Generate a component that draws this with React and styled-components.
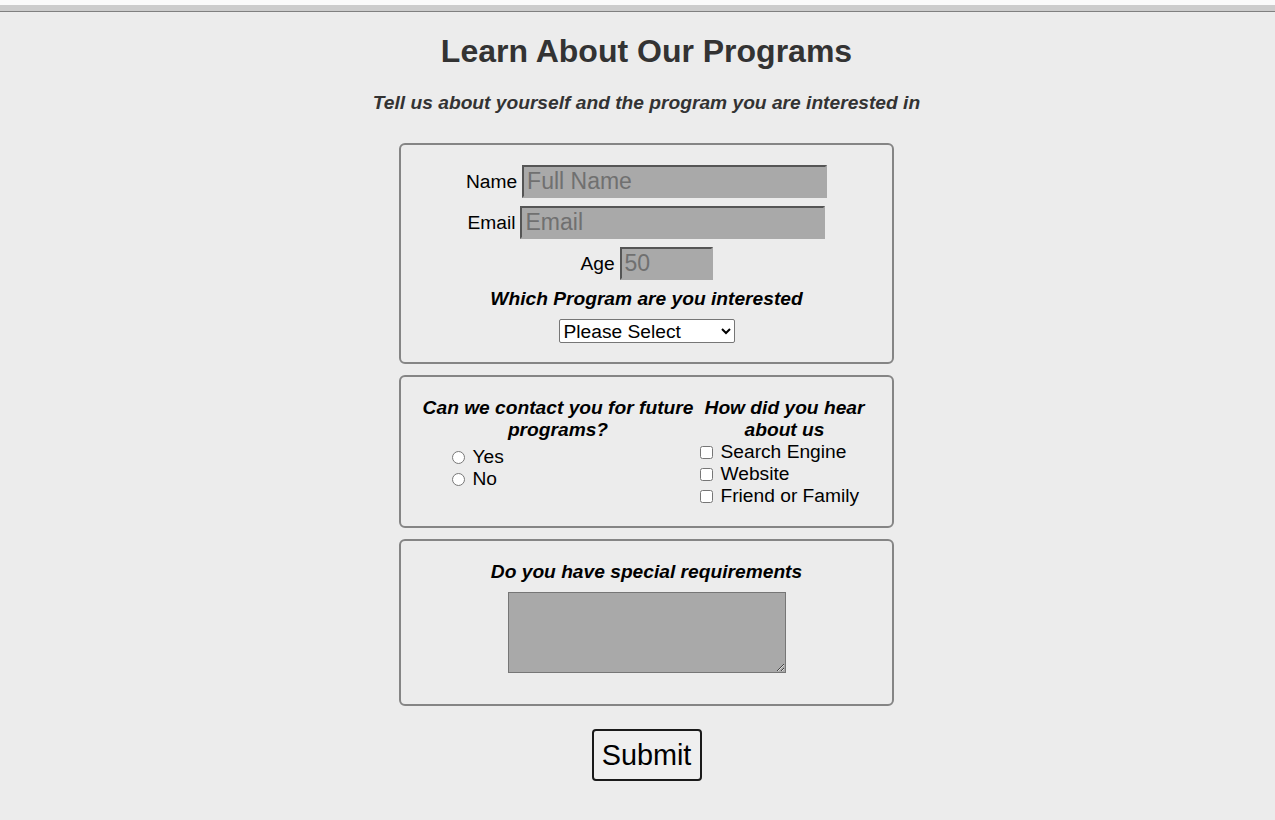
import React from 'react'
import styled, { createGlobalStyle } from 'styled-components'

const GlobalStyle = createGlobalStyle`
  body {
    margin: 0;
    background: #ececec;
    font-family: "Liberation Sans", Arial, sans-serif;
    color: #000;
  }
`

const TopStrip = styled.div`
  height: 6px;
  background: #cccccc;
  border-top: 5px solid #fafafa;
  border-bottom: 1px solid #808080;
`

const Page = styled.main`
  display: flex;
  flex-direction: column;
  align-items: center;
  padding: 21px 0 40px 18px;
`

const Title = styled.h1`
  margin: 0;
  font-size: 32px;
  line-height: 37px;
  font-weight: bold;
  color: #333;
`

const Subtitle = styled.p`
  margin: 22px 0 29px;
  font-size: 19.2px;
  line-height: 22px;
  font-weight: bold;
  font-style: italic;
  color: #333;
`

const Form = styled.form`
  display: flex;
  flex-direction: column;
  align-items: center;
`

const Fieldset = styled.fieldset`
  box-sizing: border-box;
  width: 495px;
  margin: 0 0 11px;
  padding: ${p => p.$pad || '20px 10px 19px'};
  border: 2px solid #858585;
  border-radius: 6px;
  display: flex;
  flex-direction: column;
  align-items: center;
  gap: ${p => p.$gap || '0'};
`

const Row = styled.div`
  display: flex;
  align-items: center;
  gap: 5px;
  font-size: 19.2px;
`

const TextInput = styled.input`
  box-sizing: border-box;
  width: ${p => p.$width}px;
  height: 33px;
  padding: 1px 3px;
  font-family: inherit;
  font-size: 23px;
  background: #a9a9a9;
  border: 2px solid;
  border-color: #555 #a9a9a9 #a9a9a9 #555;
  outline: none;

  &::placeholder {
    color: #707070;
  }
`

const Question = styled.div`
  font-size: 19.2px;
  line-height: 22px;
  font-weight: bold;
  font-style: italic;
  text-align: center;
`

const Select = styled.select`
  box-sizing: border-box;
  width: 176px;
  height: 24px;
  margin-top: 1px;
  font-family: inherit;
  font-size: 19.2px;
  background: #fff;
  border: 1px solid #767676;
  border-radius: 2px;
`

const Columns = styled.div`
  display: flex;
  gap: 4px;
  padding-right: 3px;
`

const Column = styled.div`
  width: ${p => p.$width}px;
  display: flex;
  flex-direction: column;
`

const OptionList = styled.div`
  display: flex;
  flex-direction: column;
  margin-top: ${p => p.$top || '0'};
  padding-left: ${p => p.$indent || '0'};
`

const Option = styled.label`
  display: flex;
  align-items: center;
  height: 22px;
  font-size: 19.2px;

  input {
    margin: 0 8px 0 0;
    width: 13px;
    height: 13px;
  }
`

const TextArea = styled.textarea`
  box-sizing: border-box;
  width: 278px;
  height: 81px;
  margin-top: 9px;
  background: #a9a9a9;
  border: 1px solid #767676;
  font-family: inherit;
`

const SubmitButton = styled.button`
  box-sizing: border-box;
  width: 110px;
  height: 52px;
  margin-top: 12px;
  padding: 0;
  font-family: inherit;
  font-size: 28.8px;
  color: #000;
  background: #efefef;
  border: 2px solid #1a1a1a;
  border-radius: 4px;
`

export default function App() {
  return (
    <>
      <GlobalStyle />
      <TopStrip />
      <Page>
        <Title>Learn About Our Programs</Title>
        <Subtitle>Tell us about yourself and the program you are interested in</Subtitle>
        <Form onSubmit={e => e.preventDefault()}>
          <Fieldset $pad="20px 10px 19px" $gap="8px">
            <Row>
              <label htmlFor="name">Name</label>
              <TextInput id="name" $width={305} placeholder="Full Name" />
            </Row>
            <Row>
              <label htmlFor="email">Email</label>
              <TextInput id="email" $width={305} placeholder="Email" />
            </Row>
            <Row>
              <label htmlFor="age">Age</label>
              <TextInput id="age" $width={93} placeholder="50" />
            </Row>
            <Question>Which Program are you interested</Question>
            <Select defaultValue="">
              <option value="">Please Select</option>
              <option value="arts">Arts</option>
              <option value="science">Science</option>
            </Select>
          </Fieldset>

          <Fieldset $pad="20px 10px 19px">
            <Columns>
              <Column $width={275}>
                <Question>Can we contact you for future programs?</Question>
                <OptionList $top="5px" $indent="31px">
                  <Option><input type="radio" name="contact" />Yes</Option>
                  <Option><input type="radio" name="contact" />No</Option>
                </OptionList>
              </Column>
              <Column $width={170}>
                <Question>How did you hear about us</Question>
                <OptionList>
                  <Option><input type="checkbox" />Search Engine</Option>
                  <Option><input type="checkbox" />Website</Option>
                  <Option><input type="checkbox" />Friend or Family</Option>
                </OptionList>
              </Column>
            </Columns>
          </Fieldset>

          <Fieldset $pad="20px 10px 31px">
            <Question>Do you have special requirements</Question>
            <TextArea />
          </Fieldset>

          <SubmitButton type="submit">Submit</SubmitButton>
        </Form>
      </Page>
    </>
  )
}
